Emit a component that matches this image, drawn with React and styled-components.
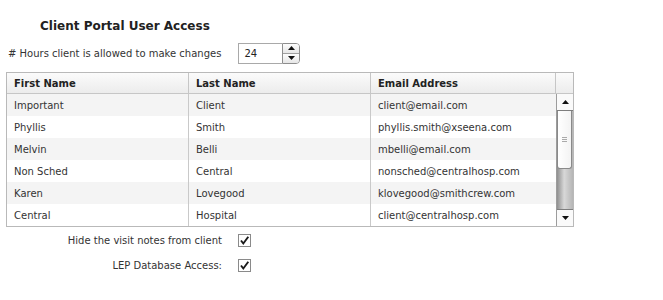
import React, { useState } from 'react'
import styled, { createGlobalStyle } from 'styled-components'

const Global = createGlobalStyle`
  body {
    margin: 0;
    background: #fff;
    font-family: "DejaVu Sans", Verdana, sans-serif;
    color: #222;
  }
`;

const Page = styled.div`
  width: 663px;
  height: 300px;
  padding: 18px 0 0 6px;
  box-sizing: border-box;
`;

const Title = styled.h2`
  margin: 0 0 8px 34px;
  font-size: 12px;
  font-weight: bold;
  color: #222;
  line-height: 16px;
`;

const HoursRow = styled.div`
  display: flex;
  align-items: center;
  gap: 17px;
  padding-left: 2px;
  font-size: 10px;
  height: 22px;
  margin-bottom: 8px;
  color: #333;
`;

const Spinner = styled.div`
  display: flex;
  align-items: stretch;
  height: 21px;
`;

const SpinInput = styled.input`
  width: 44px;
  height: 21px;
  box-sizing: border-box;
  border: 1px solid #a9a9a9;
  border-right: none;
  padding: 0 5px;
  font-family: inherit;
  font-size: 10px;
  color: #222;
  outline: none;
`;

const SpinButtons = styled.div`
  width: 18px;
  display: flex;
  flex-direction: column;
  border: 1px solid #8e8e8e;
  border-radius: 0 4px 4px 0;
  overflow: hidden;
  box-sizing: border-box;
`;

const SpinBtn = styled.div`
  flex: 1;
  display: flex;
  align-items: center;
  justify-content: center;
  background: linear-gradient(#fdfdfd, #e6e6e6);
  border-top: ${p => (p.$down ? '1px solid #a0a0a0' : 'none')};
`;

const Grid = styled.div`
  width: 566px;
  border: 1px solid #b9b9b9;
  display: grid;
  grid-template-columns: 182px 182px 185px 17px;
  font-size: 10px;
`;

const HeadCell = styled.div`
  height: 21px;
  display: flex;
  align-items: center;
  padding-left: 7px;
  font-weight: bold;
  background: linear-gradient(#fbfbfb, #ececec);
  border-bottom: 1px solid #c6c6c6;
  border-right: ${p => (p.$last ? 'none' : '1px solid #c6c6c6')};
  box-sizing: border-box;
  color: #222;
`;

const Body = styled.div`
  grid-column: 1 / 4;
  display: grid;
  grid-template-columns: 182px 182px 185px;
`;

const Cell = styled.div`
  height: 22px;
  display: flex;
  align-items: center;
  padding-left: 7px;
  background: ${p => (p.$odd ? '#f4f4f4' : '#fff')};
  border-right: ${p => (p.$last ? 'none' : '1px solid #c9c9c9')};
  box-sizing: border-box;
  white-space: nowrap;
  color: #333;
`;

const Scroll = styled.div`
  display: flex;
  flex-direction: column;
  border-left: 1px solid #9c9c9c;
  background: #fff;
`;

const ArrowBtn = styled.div`
  height: 16px;
  display: flex;
  align-items: center;
  justify-content: center;
  border-${p => (p.$down ? 'top' : 'bottom')}: 1px solid #7e7e7e;
  background: #fafafa;
`;

const Track = styled.div`
  flex: 1;
  display: flex;
  flex-direction: column;
  background: linear-gradient(90deg, #8f8f8f, #d8d8d8 45%, #b5b5b5);
`;

const Thumb = styled.div`
  height: 58px;
  margin: 0 1px 0 0;
  background: linear-gradient(90deg, #fff, #f3f3f3);
  border: 1px solid #8a8a8a;
  border-top: none;
  border-radius: 0 0 3px 3px;
  display: flex;
  align-items: center;
  justify-content: center;
  box-sizing: border-box;
`;

const CheckRow = styled.div`
  display: flex;
  align-items: center;
  justify-content: flex-end;
  width: 245px;
  gap: 16px;
  font-size: 10px;
  height: 15px;
  color: #333;
  margin-top: ${p => p.$first ? '6px' : '10px'};
`;

const Box = styled.div`
  width: 13px;
  height: 13px;
  border: 1px solid #8a8a8a;
  box-sizing: border-box;
  background: #fff;
  display: flex;
  align-items: center;
  justify-content: center;
`;

const rows = [
  ['Important', 'Client', 'client@email.com'],
  ['Phyllis', 'Smith', 'phyllis.smith@xseena.com'],
  ['Melvin', 'Belli', 'mbelli@email.com'],
  ['Non Sched', 'Central', 'nonsched@centralhosp.com'],
  ['Karen', 'Lovegood', 'klovegood@smithcrew.com'],
  ['Central', 'Hospital', 'client@centralhosp.com'],
];

const Tri = ({ down }) => (
  <svg width="7" height="4" viewBox="0 0 7 4">
    <path d={down ? 'M0 0H7L3.5 4Z' : 'M3.5 0L7 4H0Z'} fill="#111" />
  </svg>
);

const Check = () => (
  <svg width="11" height="11" viewBox="0 0 11 11">
    <path d="M2 5.5L4.3 8.5L9.3 1.8" stroke="#1a1a1a" strokeWidth="1.9" fill="none" />
  </svg>
);

const App = () => {
  const [hours, setHours] = useState('24');
  return (
    <Page>
      <Global />
      <Title>Client Portal User Access</Title>
      <HoursRow>
        <span># Hours client is allowed to make changes</span>
        <Spinner>
          <SpinInput value={hours} onChange={e => setHours(e.target.value)} />
          <SpinButtons>
            <SpinBtn><Tri /></SpinBtn>
            <SpinBtn $down><Tri down /></SpinBtn>
          </SpinButtons>
        </Spinner>
      </HoursRow>
      <Grid>
        <HeadCell>First Name</HeadCell>
        <HeadCell>Last Name</HeadCell>
        <HeadCell>Email Address</HeadCell>
        <HeadCell $last />
        <Body>
          {rows.map((r, i) =>
            r.map((c, j) => (
              <Cell key={i + '-' + j} $odd={i % 2 === 0} $last={j === 2}>{c}</Cell>
            ))
          )}
        </Body>
        <Scroll>
          <ArrowBtn><Tri /></ArrowBtn>
          <Track>
            <Thumb>
              <svg width="5" height="6" viewBox="0 0 5 6">
                <path d="M0 .5H5M0 2.5H5M0 4.5H5" stroke="#aaa" strokeWidth="1" />
              </svg>
            </Thumb>
          </Track>
          <ArrowBtn $down><Tri down /></ArrowBtn>
        </Scroll>
      </Grid>
      <CheckRow $first>
        <span>Hide the visit notes from client</span>
        <Box><Check /></Box>
      </CheckRow>
      <CheckRow>
        <span>LEP Database Access:</span>
        <Box><Check /></Box>
      </CheckRow>
    </Page>
  );
};

export default App;
